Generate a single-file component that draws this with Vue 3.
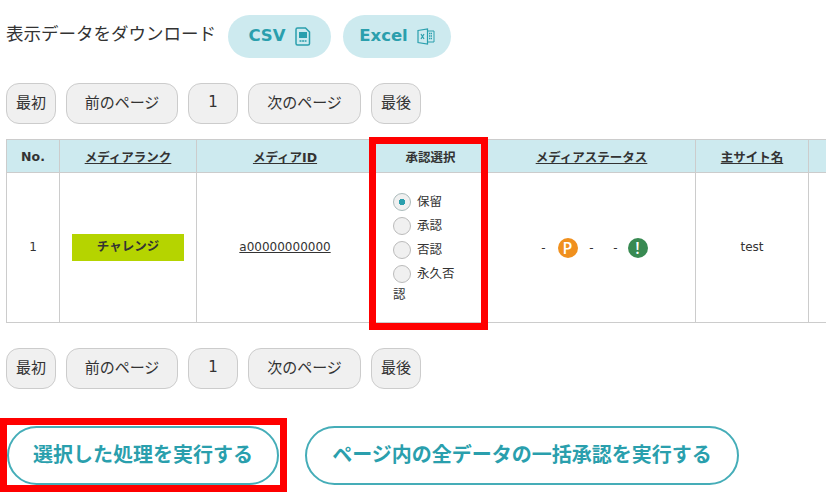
<script setup>
const pages = [
  { label: '最初', wide: false },
  { label: '前のページ', wide: true },
  { label: '1', wide: false },
  { label: '次のページ', wide: true },
  { label: '最後', wide: false },
]
const headers = [
  { label: 'No.', link: false },
  { label: 'メディアランク', link: true },
  { label: 'メディアID', link: true },
  { label: '承認選択', link: false },
  { label: 'メディアステータス', link: true },
  { label: '主サイト名', link: true },
  { label: '', link: false },
]
const choices = [
  { label: '保留', on: true },
  { label: '承認', on: false },
  { label: '否認', on: false },
  { label: '永久否認', on: false },
]
</script>

<template>
  <div class="page">
    <div class="download">
      <span class="download-label">表示データをダウンロード</span>
      <a class="pill pill-csv">CSV
        <svg class="icon" width="16" height="19" viewBox="0 0 16 19" fill="none" stroke="#2a9fad">
          <path d="M2.5 1h8l4 4v11.5a1.5 1.5 0 0 1-1.5 1.5H2.500a1.500 1.500 0 0 1-1.500-1.500V2.500A1.500 1.500 0 0 1 2.500 1z" stroke-width="1.500"/>
          <rect x="4" y="5" width="8" height="6" fill="#2a9fad" stroke="none"/>
          <path d="M4.500 14h7" stroke-width="1.500" stroke-dasharray="2 .6"/>
        </svg>
      </a>
      <a class="pill pill-excel">Excel
        <svg class="icon" width="18" height="17" viewBox="0 0 18 17" fill="none" stroke="#2a9fad">
          <path d="M10 3h7v11h-7" stroke-width="1"/>
          <path d="M12 5.500h3M12 8h3M12 10.500h3" stroke-width="1.500" stroke-dasharray="1.500 .5"/>
          <path d="M1 2.500 10.500 1v15L1 14.500z" stroke-width="1.200"/>
          <path d="M4 6l3 5M7 6l-3 5" stroke-width="1.200"/>
        </svg>
      </a>
    </div>

    <nav class="pager">
      <button v-for="p in pages" :key="p.label" class="page-btn" :class="{ wide: p.wide }">{{ p.label }}</button>
    </nav>

    <table class="grid">
      <colgroup>
        <col class="c1" /><col class="c2" /><col class="c3" /><col class="c4" /><col class="c5" /><col class="c6" /><col class="c7" />
      </colgroup>
      <thead>
        <tr>
          <th v-for="h in headers" :key="h.label"><u v-if="h.link">{{ h.label }}</u><template v-else>{{ h.label }}</template></th>
        </tr>
      </thead>
      <tbody>
        <tr>
          <td class="plain">1</td>
          <td><span class="rank">チャレンジ</span></td>
          <td class="plain"><u>a00000000000</u></td>
          <td class="choices">
            <label v-for="c in choices" :key="c.label" class="choice">
              <span class="radio" :class="{ on: c.on }"></span>{{ c.label }}
            </label>
          </td>
          <td>
            <div class="status">
              <span class="slot">-</span>
              <span class="slot"><span class="dot dot-p">P</span></span>
              <span class="slot">-</span>
              <span class="slot">-</span>
              <span class="slot slot-last"><span class="dot dot-alert">!</span></span>
            </div>
          </td>
          <td class="plain">test</td>
          <td></td>
        </tr>
      </tbody>
    </table>

    <nav class="pager pager-bottom">
      <button v-for="p in pages" :key="p.label" class="page-btn" :class="{ wide: p.wide }">{{ p.label }}</button>
    </nav>

    <div class="actions">
      <button class="action action-run">選択した処理を実行する</button>
      <button class="action action-all">ページ内の全データの一括承認を実行する</button>
    </div>

    <div class="mark mark-col"></div>
    <div class="mark mark-btn"></div>
  </div>
</template>

<style scoped>
.page {
  position: relative;
  width: 826px;
  height: 495px;
  overflow: hidden;
  box-sizing: border-box;
  padding: 15px 0 0 6px;
  background: #fff;
  color: #333;
  font-family: "DejaVu Sans", "Noto Sans CJK JP", sans-serif;
}
.download {
  display: flex;
  align-items: center;
  height: 43px;
}
.download-label {
  width: 222px;
  font-size: 17.500px;
  line-height: 39px;
  align-self: flex-start;
  white-space: nowrap;
}
.pill {
  display: flex;
  align-items: center;
  justify-content: center;
  height: 41px;
  padding-bottom: 2px;
  border-radius: 22px;
  background: #cdeaef;
  color: #2a9fad;
  font-size: 16.500px;
  font-weight: 700;
}
.pill-csv { width: 103px; margin-right: 12px; }
.pill-excel { width: 108px; }
.icon { margin-left: 9px; margin-top: 2px; }
.pager {
  display: flex;
  gap: 10px;
  margin-top: 25px;
}
.pager-bottom { margin-top: 25px; }
.page-btn {
  width: 50px;
  height: 41px;
  padding: 0 0 4px;
  border: 1px solid #ccc;
  border-radius: 13px;
  background: #f0f0f0;
  color: #333;
  font-family: inherit;
  font-size: 15px;
}
.page-btn.wide { width: 112px; }
.page-btn.wide:nth-child(4) { width: 113px; }
.grid {
  width: 1000px;
  margin-top: 15px;
  table-layout: fixed;
  border-collapse: collapse;
  font-size: 12px;
}
.c1 { width: 53px; }
.c2 { width: 137px; }
.c3 { width: 177px; }
.c4 { width: 114px; }
.c5 { width: 208px; }
.c6 { width: 113px; }
.grid th,
.grid td {
  border: 1px solid #ccc;
  text-align: center;
  vertical-align: middle;
  padding: 0;
}
.grid th {
  height: 32px;
  background: #cdeaef;
  font-size: 12.500px;
  font-weight: 700;
}
.grid td { height: 149px; }
.grid td.plain { padding-bottom: 2px; height: 147px; }
.rank {
  display: inline-block;
  width: 112px;
  height: 25px;
  padding-bottom: 2px;
  line-height: 25px;
  background: #b5d400;
  font-weight: 700;
  font-size: 12.500px;
}
.grid .choices {
  padding: 0 30px 2px 19px;
  height: 147px;
  text-align: left;
  font-size: 12.500px;
}
.choice {
  display: block;
  line-height: 17px;
}
.radio {
  display: inline-block;
  box-sizing: border-box;
  width: 18px;
  height: 18px;
  margin: 3px 6px 3px 0;
  border: 1px solid #bbb;
  border-radius: 50%;
  background: #f0f0f0;
  vertical-align: middle;
}
.radio.on {
  background: radial-gradient(circle, #2a9fad 0 3px, #f0f0f0 3.500px);
  border-color: #aabbbb;
}
.status {
  display: flex;
  align-items: center;
  justify-content: center;
}
.slot {
  display: flex;
  justify-content: center;
  width: 24px;
}
.slot-last { margin-right: 2px; margin-left: -2px; }
.dot {
  display: flex;
  align-items: center;
  justify-content: center;
  width: 20px;
  height: 20px;
  border-radius: 50%;
  color: #fff;
  font-family: "Open Sans", sans-serif;
  font-size: 16px;
  font-weight: 600;
}
.dot-p { background: #f0901e; }
.dot-alert { background: #388a52; }
.actions {
  display: flex;
  gap: 26px;
  margin: 37px 0 0 1px;
}
.action {
  height: 59px;
  border: 2px solid #45adb8;
  border-radius: 30px;
  background: #fff;
  color: #2a9fad;
  font-family: inherit;
  font-size: 20px;
  font-weight: 700;
  padding: 0 0 4px;
}
.action-run { width: 272px; }
.action-all { width: 434px; }
.mark {
  position: absolute;
  box-sizing: border-box;
  border: 7px solid #f00;
  pointer-events: none;
}
.mark-col { left: 369px; top: 137px; width: 119px; height: 193px; }
.mark-btn { left: 0; top: 418px; width: 287px; height: 74px; }
</style>
